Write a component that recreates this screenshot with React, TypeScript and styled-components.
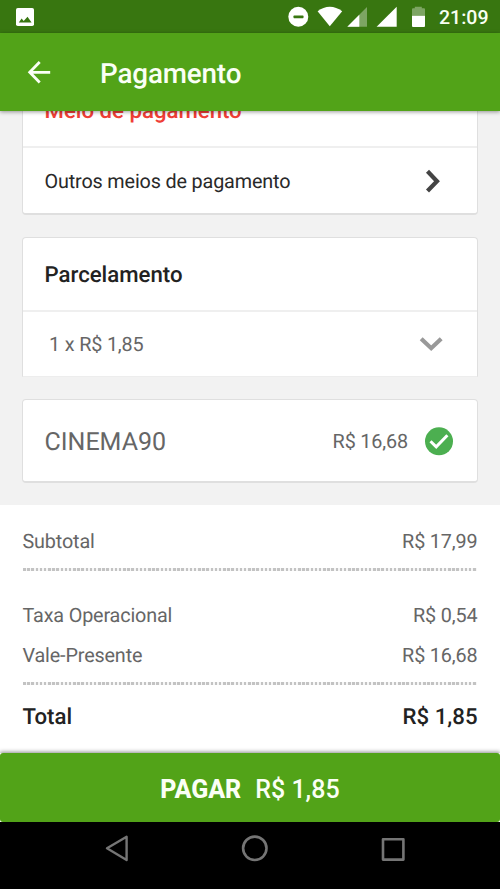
import React from 'react';
import styled, { createGlobalStyle } from 'styled-components';

const GlobalStyle = createGlobalStyle`
  *, *::before, *::after { box-sizing: border-box; }
  body {
    margin: 0;
    background: #fff;
    font-family: Roboto, "Liberation Sans", sans-serif;
    font-size: 19.8px;
    letter-spacing: -0.15px;
    color: #666;
    text-rendering: geometricPrecision;
  }
`;

const Screen = styled.div`
  display: flex;
  flex-direction: column;
  width: 500px;
  height: 889px;
  overflow: hidden;
`;

const StatusBar = styled.div`
  display: flex;
  align-items: center;
  flex: 0 0 33px;
  padding: 0 11px 0 16px;
  background: #387610;
  color: #f8fff2;
`;

const StatusIcons = styled.div`
  display: flex;
  flex: 1;
  justify-content: flex-end;
  svg { display: block; }
`;

const Clock = styled.span`
  width: 50px;
  margin-left: 14px;
  padding-top: 2px;
  font-size: 19.5px;
  font-weight: 500;
  letter-spacing: 0;
  white-space: nowrap;
`;

const AppBar = styled.header`
  position: relative;
  z-index: 1;
  display: flex;
  align-items: center;
  flex: 0 0 78px;
  padding-left: 27px;
  background: #52a318;
  box-shadow: 0 1px 4px rgba(0, 0, 0, 0.4);
  color: #fafff5;
  svg { display: block; }
`;

const Title = styled.h1`
  margin: 2px 0 0 49px;
  font-size: 27.8px;
  font-weight: 500;
`;

const Content = styled.main`
  flex: 0 0 394px;
  padding: 0 22px;
  overflow: hidden;
  background: #f2f2f2;
`;

const Card = styled.section<{ $h: number; $top: number; $flat?: boolean }>`
  display: flex;
  flex-direction: column;
  height: ${p => p.$h}px;
  margin-top: ${p => p.$top}px;
  background: #fff;
  border: 1px solid #dfdfdf;
  border-bottom-width: 2px;
  border-radius: 4px;
  ${p => p.$flat && 'border-radius: 4px 4px 0 0; border-bottom: 1px solid #ededed;'}
`;

const CardHeader = styled.h2<{ $color: string }>`
  display: flex;
  align-items: center;
  flex: 0 0 74px;
  margin: 0;
  padding: 2px 0 0 21.5px;
  border-bottom: 2px solid #efefef;
  color: ${p => p.$color};
  font-size: 22.2px;
  font-weight: 500;
  letter-spacing: 0;
`;

const CardRow = styled.div<{ $left: number; $right: number; $color: string }>`
  display: flex;
  flex: 1;
  align-items: center;
  justify-content: space-between;
  padding: 0 ${p => p.$right}px 0 ${p => p.$left}px;
  color: ${p => p.$color};
  svg { display: block; }
`;

const RowLabel = styled.span<{ $drop?: number }>`
  padding-top: ${p => p.$drop ?? 0}px;
`;

const Coupon = styled.span`
  padding-top: 3px;
  font-size: 25px;
  letter-spacing: 0;
`;

const CouponValue = styled.div`
  display: flex;
  align-items: center;
  gap: 17px;
  padding-top: 1px;
`;

const Summary = styled.section`
  display: flex;
  flex-direction: column;
  flex: 0 0 248px;
  padding: 16px 22.5px 0;
  background: #fff;
`;

const SummaryRow = styled.div<{ $h: number; $strong?: boolean }>`
  display: flex;
  align-items: center;
  justify-content: space-between;
  height: ${p => p.$h}px;
  ${p => p.$strong && 'padding-top: 2px; color: #222; font-size: 22.2px; font-weight: 500; letter-spacing: 0;'}
`;

const DottedLine = styled.div<{ $top: number; $bottom: number }>`
  height: 3px;
  margin: ${p => p.$top}px 0.5px ${p => p.$bottom}px 0.5px;
  background: repeating-linear-gradient(90deg, #c3c3c3 0 2.6px, #f6f6f6 2.6px 4.167px);
`;

const PayWrap = styled.div`
  position: relative;
  flex: 0 0 69px;
  background: #fff;
  box-shadow: 0 -1px 4px rgba(0, 0, 0, 0.45);
`;

const PayButton = styled.button`
  display: flex;
  align-items: center;
  justify-content: center;
  gap: 14px;
  width: 100%;
  height: 69px;
  padding: 3px 0 0;
  border: 0;
  border-radius: 3px;
  background: #52a318;
  color: #fafff5;
  font: 500 25px Roboto, "Liberation Sans", sans-serif;
  strong { font-weight: 800; }
`;

const NavBar = styled.nav`
  position: relative;
  display: flex;
  align-items: flex-start;
  justify-content: space-between;
  flex: 0 0 67px;
  padding: 12px 94px 0 104px;
  background: #000;
  svg { display: block; }
`;

const StatusGlyphs = () => (
  <svg width="140" height="33" viewBox="285 0 140 33" fill="#fff">
    <circle cx="298.3" cy="16.8" r="10" />
    <rect x="293.5" y="15.6" width="10" height="2.6" rx=".6" fill="#387610" />
    <path d="M317.6 11.3Q323.3 6.7 329.8 6.7T342.2 11.3L329.8 26.3Z" />
    <path d="M347.3 26.7L367 7V26.7Z" opacity=".35" />
    <path d="M347.3 26.7L359.3 14.7V26.7Z" />
    <path d="M376.6 26.7L396.7 6.8V26.7Z" />
    <path d="M412 15.7V9.2Q412 8.3 413 8.3H414.8V6.8H421.8V8.3H424Q425 8.3 425 9.2V15.7Z" opacity=".35" />
    <path d="M412 15.7H425V26Q425 26.9 424 26.9H413Q412 26.9 412 26Z" />
  </svg>
);

const SUMMARY_FEES = [
  { label: 'Taxa Operacional', value: 'R$ 0,54' },
  { label: 'Vale-Presente', value: 'R$ 16,68' },
];

export default function App() {
  return (
    <>
      <GlobalStyle />
      <Screen>
        <StatusBar>
          <svg width="18" height="18" viewBox="0 0 18 18">
            <rect width="18" height="18" rx="1.8" fill="#fff" />
            <path d="M2.8 14.6L5.6 10.6L7.7 13L11.5 8.7L15.6 14.6Z" fill="#387610" />
          </svg>
          <StatusIcons><StatusGlyphs /></StatusIcons>
          <Clock>21:09</Clock>
        </StatusBar>
        <AppBar>
          <svg width="24" height="24" viewBox="0 0 24 24" fill="none" stroke="#fafff5" strokeWidth="2.8">
            <path d="M23.2 12.3H2.8M12.7 2L2.7 12.3L12.7 22.5" />
          </svg>
          <Title>Pagamento</Title>
        </AppBar>
        <Content>
          <Card $h={142} $top={-38}>
            <CardHeader $color="#ef3e36">Meio de pagamento</CardHeader>
            <CardRow $left={21.5} $right={36} $color="#292929">
              <RowLabel $drop={2}>Outros meios de pagamento</RowLabel>
              <svg width="16" height="24" viewBox="0 0 16 24" fill="none" stroke="#444" strokeWidth="4.2">
                <path d="M2.5 2.2L12 12.2L2.5 22" />
              </svg>
            </CardRow>
          </Card>
          <Card $h={140} $top={22} $flat>
            <CardHeader $color="#222">Parcelamento</CardHeader>
            <CardRow $left={26} $right={34} $color="#666">
              <RowLabel $drop={1}>1 x R$ 1,85</RowLabel>
              <svg width="24" height="16" viewBox="0 0 24 16" fill="none" stroke="#999" strokeWidth="4.2">
                <path d="M2.2 2.8L12.2 12.2L22.2 2.8" />
              </svg>
            </CardRow>
          </Card>
          <Card $h={84} $top={22}>
            <CardRow $left={21.5} $right={23} $color="#666">
              <Coupon>CINEMA90</Coupon>
              <CouponValue>
                <span>R$ 16,68</span>
                <svg width="29" height="29" viewBox="0 0 29 29">
                  <circle cx="14" cy="14.3" r="14" fill="#4caf50" />
                  <path d="M5.5 14.3L11.2 19.9L22.4 8.2" fill="none" stroke="#fff" strokeWidth="3" />
                </svg>
              </CouponValue>
            </CardRow>
          </Card>
        </Content>
        <Summary>
          <SummaryRow $h={40}><span>Subtotal</span><span>R$ 17,99</span></SummaryRow>
          <DottedLine $top={7} $bottom={24} />
          {SUMMARY_FEES.map(fee => (
            <SummaryRow key={fee.label} $h={40}><span>{fee.label}</span><span>{fee.value}</span></SummaryRow>
          ))}
          <DottedLine $top={7} $bottom={11} />
          <SummaryRow $h={40} $strong><span>Total</span><span>R$ 1,85</span></SummaryRow>
        </Summary>
        <PayWrap>
          <PayButton><strong>PAGAR</strong><span>R$ 1,85</span></PayButton>
        </PayWrap>
        <NavBar>
          <svg width="26" height="28" viewBox="0 0 26 28" fill="none" stroke="#757575" strokeWidth="2.4" strokeLinejoin="round">
            <path d="M22.6 2.8V26L3 14.3Z" />
          </svg>
          <svg width="28" height="28" viewBox="0 0 28 28" fill="none" stroke="#757575" strokeWidth="2.6">
            <circle cx="13.8" cy="14.3" r="11.7" />
          </svg>
          <svg width="26" height="28" viewBox="0 0 26 28" fill="none" stroke="#757575" strokeWidth="2.6" strokeLinejoin="round">
            <rect x="3" y="5.2" width="20.4" height="20.4" />
          </svg>
        </NavBar>
      </Screen>
    </>
  );
}
